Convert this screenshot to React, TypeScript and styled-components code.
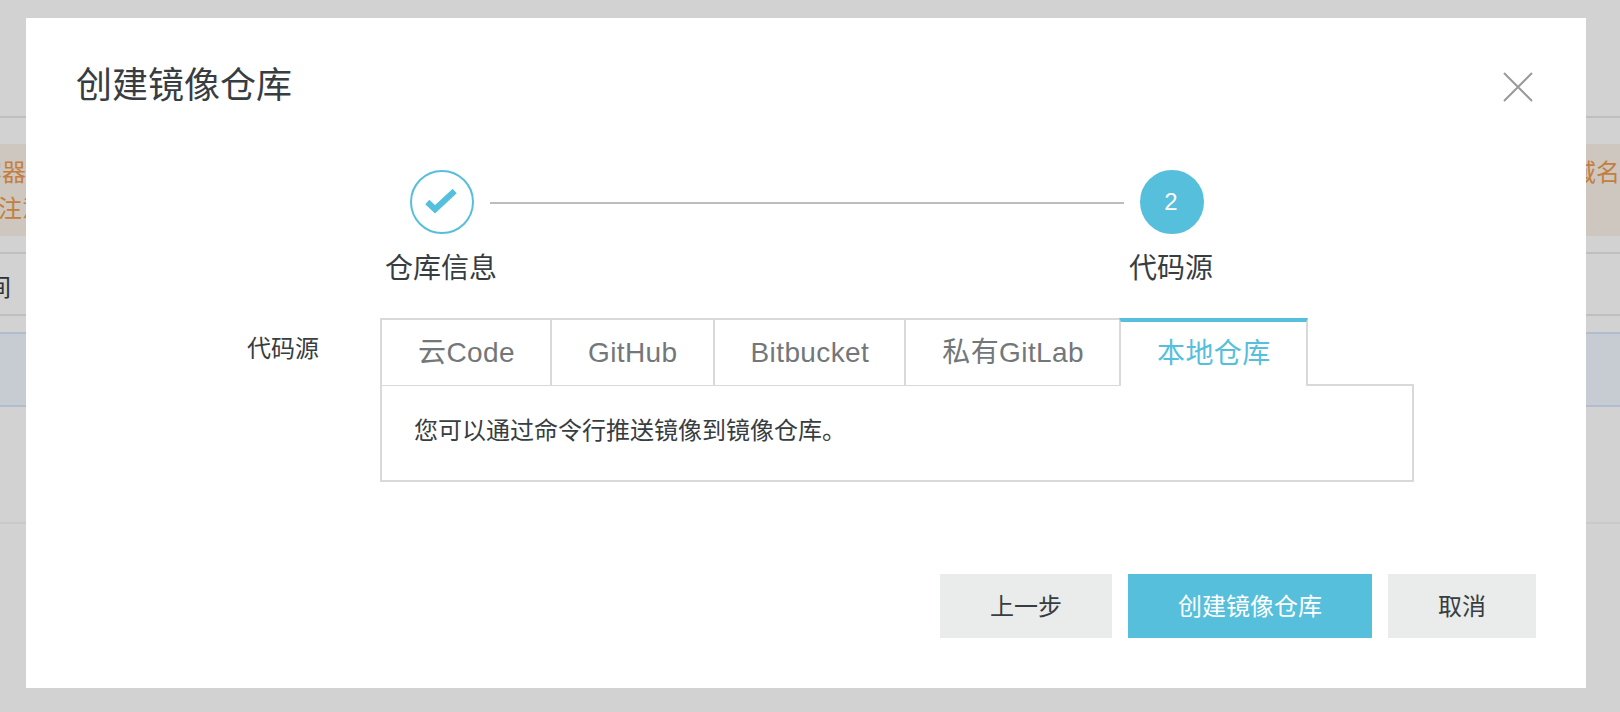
import styled, { createGlobalStyle } from 'styled-components';

const GlobalStyle = createGlobalStyle`
  html, body {
    margin: 0;
    padding: 0;
    height: 100%;
    overflow: hidden;
    background: #fff;
  }
  body {
    font-family: "Liberation Sans", "Noto Sans CJK SC", sans-serif;
    color: #373d41;
  }
  * {
    box-sizing: border-box;
  }
`;

const tabs = ['云Code', 'GitHub', 'Bitbucket', '私有GitLab', '本地仓库'];

// the console page that sits behind the dialog
const Page = styled.div`
  height: 712px;
  overflow: hidden;
  font-size: 24px;
`;

const TopBar = styled.div`
  height: 118px;
  border-bottom: 2px solid #e8e8e8;
`;

const Notice = styled.div`
  display: flex;
  justify-content: space-between;
  height: 92px;
  margin-top: 26px;
  padding-top: 11px;
  background: #fbf2e8;
  color: #ee9a4d;
  line-height: 36px;
`;

const NoticeLine = styled.div<{ $shift: number }>`
  margin-left: ${(p) => p.$shift}px;
  white-space: nowrap;
`;

const HeadRow = styled.div`
  display: flex;
  align-items: center;
  height: 64px;
  margin-top: 16px;
  padding-top: 3px;
  border-top: 2px solid #e8e8e8;
  border-bottom: 2px solid #e8e8e8;
`;

const HeadCell = styled.span`
  margin-left: -37px;
  white-space: nowrap;
`;

const SelectedRow = styled.div`
  height: 75px;
  margin-top: 16px;
  background: #f1f8ff;
  border-top: 2px solid #d7e6fa;
  border-bottom: 2px solid #d7e6fa;
`;

const EmptyRow = styled.div`
  height: 117px;
  border-bottom: 2px solid #f5f5f5;
`;

const Overlay = styled.div`
  position: fixed;
  inset: 0;
  display: flex;
  padding: 18px 34px 24px 26px;
  background: rgba(0, 0, 0, 0.175);
`;

const Modal = styled.div`
  position: relative;
  display: flex;
  flex-direction: column;
  flex: 1;
  background: #fff;
`;

const Title = styled.h2`
  margin: 0;
  padding: 43px 0 0 50px;
  font-size: 36px;
  font-weight: 400;
  line-height: 50px;
`;

const CloseButton = styled.button`
  position: absolute;
  top: 54px;
  right: 53px;
  display: flex;
  width: 30px;
  height: 30px;
  padding: 0;
  border: 0;
  background: none;
`;

const Steps = styled.div`
  display: flex;
  align-items: flex-start;
  width: 794px;
  margin: 59px 0 0 384px;
`;

const Step = styled.div`
  display: flex;
  flex-direction: column;
  align-items: center;
  width: 64px;
  flex-shrink: 0;
`;

const StepCircle = styled.div<{ $done?: boolean }>`
  display: flex;
  align-items: center;
  justify-content: center;
  width: 64px;
  height: 64px;
  padding-right: 2px;
  border-radius: 50%;
  border: 2px solid #56bfdc;
  background: ${(p) => (p.$done ? '#fff' : '#56bfdc')};
  color: #fff;
  font-size: 24px;
`;

const StepLabel = styled.div`
  margin: 15px 2px 0 0;
  font-size: 28px;
  line-height: 40px;
  white-space: nowrap;
`;

const StepLine = styled.div`
  flex: 1;
  height: 2px;
  margin: 32px 16px 0;
  background: #bdbdbd;
`;

const FormRow = styled.div`
  display: grid;
  grid-template-columns: 294px 1034px;
  column-gap: 60px;
  margin-top: 29px;
`;

const FormLabel = styled.div`
  padding: 13px 1px 0 0;
  font-size: 24px;
  line-height: 36px;
  text-align: right;
`;

const TabBar = styled.div`
  display: flex;
  height: 68px;
`;

const Tab = styled.div<{ $active?: boolean }>`
  position: relative;
  z-index: ${(p) => (p.$active ? 1 : 0)};
  height: ${(p) => (p.$active ? '68px' : '67px')};
  margin-left: ${(p) => (p.$active ? '-2px' : '0')};
  padding: 0 35px 0 36px;
  border-top: ${(p) => (p.$active ? '4px solid #56bfdc' : '2px solid #d9d9d9')};
  border-right: 2px solid #d9d9d9;
  border-left: ${(p) => (p.$active ? '2px solid #d9d9d9' : '0')};
  background: #fff;
  color: ${(p) => (p.$active ? '#56bfdc' : '#73777a')};
  font-size: 28px;
  letter-spacing: 0.4px;
  line-height: ${(p) => (p.$active ? '64px' : '66px')};
  white-space: nowrap;

  &:first-child {
    border-left: 2px solid #d9d9d9;
  }
`;

const TabPanel = styled.div`
  height: 98px;
  margin-top: -2px;
  padding: 27px 32px 0;
  border: 2px solid #d9d9d9;
  font-size: 24px;
  line-height: 36px;
`;

const Footer = styled.div`
  display: flex;
  justify-content: flex-end;
  gap: 16px;
  margin-top: auto;
  padding: 0 50px 50px 0;
`;

const Button = styled.button<{ $primary?: boolean }>`
  height: 64px;
  padding: 0 50px 3px;
  border: 0;
  background: ${(p) => (p.$primary ? '#56bfdc' : '#eaecec')};
  color: ${(p) => (p.$primary ? '#fff' : '#373d41')};
  font-family: inherit;
  font-size: 24px;
`;

export default function App() {
  return (
    <>
      <GlobalStyle />
      <Page>
        <TopBar />
        <Notice>
          <div>
            <NoticeLine $shift={-22}>容器服务</NoticeLine>
            <NoticeLine $shift={-2}>注意</NoticeLine>
          </div>
          <div>域名</div>
        </Notice>
        <HeadRow>
          <HeadCell>时间</HeadCell>
        </HeadRow>
        <SelectedRow />
        <EmptyRow />
      </Page>
      <Overlay>
        <Modal>
          <Title>创建镜像仓库</Title>
          <CloseButton aria-label="关闭">
            <svg width="30" height="30" viewBox="0 0 30 30" fill="none" stroke="#9a9a9a" strokeWidth="2">
              <path d="M1 1 L29 29 M29 1 L1 29" />
            </svg>
          </CloseButton>
          <Steps>
            <Step>
              <StepCircle $done>
                <svg width="32" height="26" viewBox="0 0 32 26" fill="none" stroke="#56bfdc" strokeWidth="6">
                  <path d="M2.3 13 L10 20.3 L29.7 2" />
                </svg>
              </StepCircle>
              <StepLabel>仓库信息</StepLabel>
            </Step>
            <StepLine />
            <Step>
              <StepCircle>2</StepCircle>
              <StepLabel>代码源</StepLabel>
            </Step>
          </Steps>
          <FormRow>
            <FormLabel>代码源</FormLabel>
            <div>
              <TabBar>
                {tabs.map((tab, i) => (
                  <Tab key={tab} $active={i === tabs.length - 1}>
                    {tab}
                  </Tab>
                ))}
              </TabBar>
              <TabPanel>您可以通过命令行推送镜像到镜像仓库。</TabPanel>
            </div>
          </FormRow>
          <Footer>
            <Button>上一步</Button>
            <Button $primary>创建镜像仓库</Button>
            <Button>取消</Button>
          </Footer>
        </Modal>
      </Overlay>
    </>
  );
}
